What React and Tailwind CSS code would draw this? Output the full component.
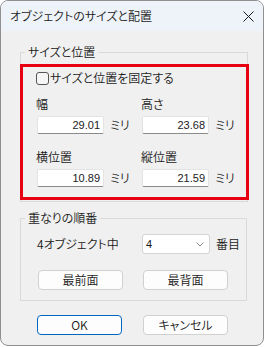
export default function App() {
  const font = "font-['Noto_Sans_CJK_JP',sans-serif] font-[350] [font-feature-settings:'palt']";
  return (
    <div className="w-[265px] h-[347px] bg-white">
      <div className={`w-[264px] h-[346px] rounded-[8px] border border-[#8f8f8f] bg-[#f0f0f0] overflow-hidden flex flex-col text-[#1a1a1a] ${font}`}>
        {/* Title bar */}
        <div className="h-[30px] bg-[#eef3f9] flex items-center justify-between pl-[9px] pr-[9px] shrink-0">
          <span className="text-[12px] leading-[16px]">オブジェクトのサイズと配置</span>
          <svg width="11" height="11" viewBox="0 0 11 11">
            <path d="M0.5 0.5 L10.5 10.5 M10.5 0.5 L0.5 10.5" stroke="#1a1a1a" strokeWidth="1" />
          </svg>
        </div>
        {/* Body */}
        <div className="flex flex-col pl-[19px]">
          <fieldset className="mt-[13px] w-[227px] border border-[#d9d9d9] pb-[1px] px-0">
            <legend className="ml-[4px] px-[3px] text-[12px] leading-[16px]">サイズと位置</legend>
            <div className="mt-[4px] -ml-[1px] -mr-[2px] h-[136px] border-[3px] border-[#e60012] pl-[13px] pt-[3px]">
              <label className="flex items-center h-[16px] gap-[1px] text-[12px]">
                <span className="w-[13px] h-[13px] rounded-[3px] border border-[#555] bg-[#f6f6f6]" />
                <span className="leading-[16px]">サイズと位置を固定する</span>
              </label>
              <div className="mt-[10px] flex flex-col gap-[15px]">
                <div className="flex">
                  <Field label="幅" value="29.01" />
                  <Field label="高さ" value="23.68" />
                </div>
                <div className="flex">
                  <Field label="横位置" value="10.89" />
                  <Field label="縦位置" value="21.59" />
                </div>
              </div>
            </div>
          </fieldset>

          <fieldset className="mt-[8px] w-[227px] border border-[#d9d9d9] px-0 pb-[10px]">
            <legend className="ml-[4px] px-[3px] text-[12px] leading-[16px]">重なりの順番</legend>
            <div className="mt-[8px] flex items-center h-[20px] pl-[16px]">
              <span className="w-[105px] text-[12px] leading-[16px]">4オブジェクト中</span>
              <div className="w-[68px] h-[20px] rounded-[3px] border border-[#d4d4d4] bg-white flex items-center justify-between pl-[3px] pr-[5px]">
                <span className="text-[11px] leading-[14px] font-['Liberation_Sans',sans-serif]">4</span>
                <svg width="8" height="5" viewBox="0 0 8 5">
                  <path d="M0.5 0.5 L4 4 L7.5 0.5" stroke="#8a8a8a" strokeWidth="1" fill="none" />
                </svg>
              </div>
              <span className="ml-[6px] text-[12px] leading-[16px]">番目</span>
            </div>
            <div className="mt-[16px] flex pl-[17px] gap-[20px]">
              <Btn>最前面</Btn>
              <Btn>最背面</Btn>
            </div>
          </fieldset>

          <div className="mt-[14px] flex pl-[17px] gap-[21px]">
            <Btn primary>OK</Btn>
            <Btn>キャンセル</Btn>
          </div>
        </div>
      </div>
    </div>
  );
}

function Field({ label, value }) {
  return (
    <div className="w-[105px] flex flex-col">
      <span className="text-[12px] leading-[16px] h-[16px]">{label}</span>
      <div className="mt-[4px] flex items-center">
        <div className="ml-[1px] w-[67px] h-[18px] bg-white border border-[#e3e3e3] border-b-[#8a8a8a] rounded-[2px] flex items-center justify-end pr-[3px]">
          <span className="text-[11px] leading-[14px] font-['Liberation_Sans',sans-serif]">{value}</span>
        </div>
        <span className="ml-[6px] text-[12px] leading-[16px]">ミリ</span>
      </div>
    </div>
  );
}

function Btn({ children, primary }) {
  return (
    <button
      className={`w-[85px] h-[20px] rounded-[4px] bg-[#fdfdfd] flex items-center justify-center text-[12px] leading-[16px] ${
        primary ? "border border-[#0067c0]" : "border border-[#d0d0d0]"
      }`}
    >
      {children}
    </button>
  );
}
